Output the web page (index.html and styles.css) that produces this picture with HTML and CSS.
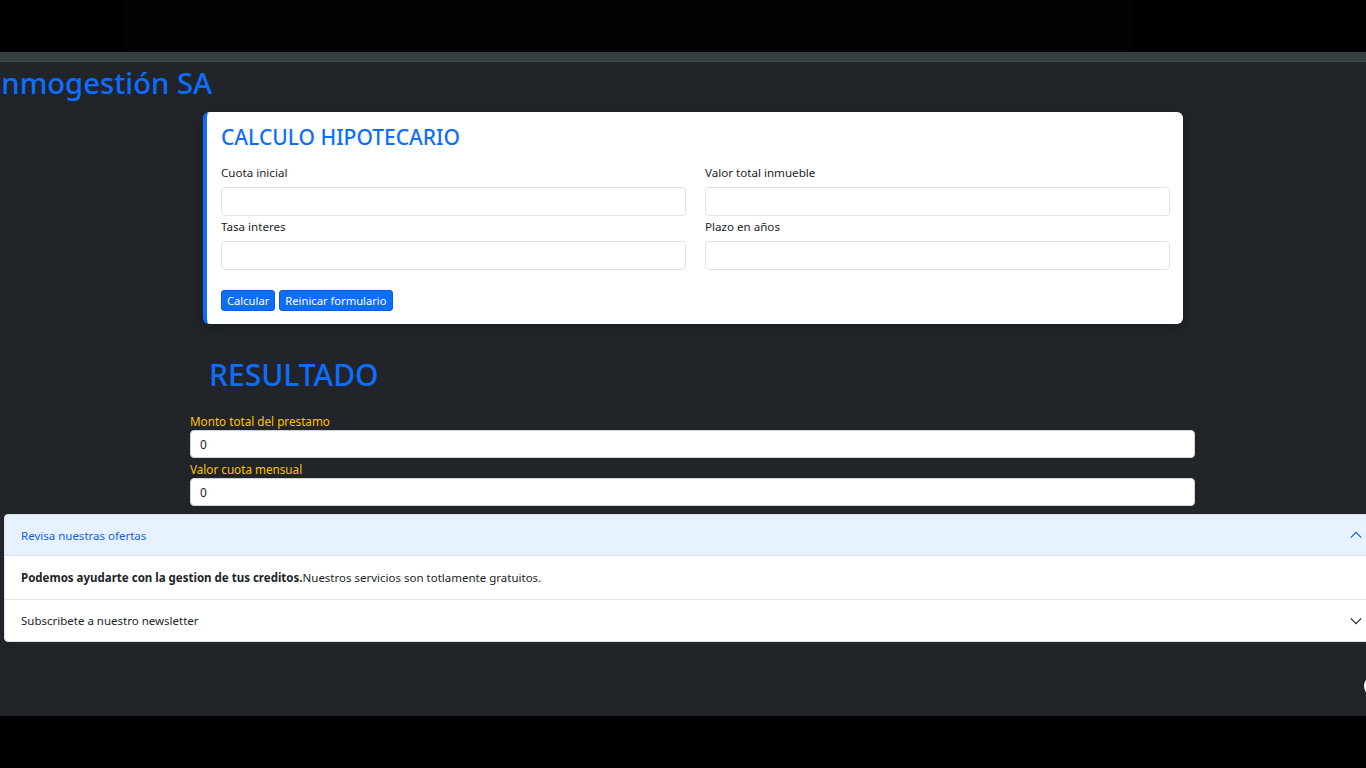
FILE: index.html
```html
<!DOCTYPE html>
<html lang="es">
<head>
<meta charset="utf-8">
<title>Inmogestión SA</title>
<link rel="stylesheet" href="styles.css">
</head>
<body>
<div class="topbar"><div class="tab"></div></div>
<div class="strip"></div>
<main class="page">
  <h3 class="brand">Inmogestión SA</h3>
  <section class="card">
    <h4 class="card-title">CALCULO HIPOTECARIO</h4>
    <div class="grid">
      <div class="field">
        <label class="label">Cuota inicial</label>
        <input class="input" type="text">
      </div>
      <div class="field">
        <label class="label">Valor total inmueble</label>
        <input class="input" type="text">
      </div>
      <div class="field">
        <label class="label">Tasa interes</label>
        <input class="input" type="text">
      </div>
      <div class="field">
        <label class="label">Plazo en años</label>
        <input class="input" type="text">
      </div>
    </div>
    <div class="actions">
      <button class="btn">Calcular</button>
      <button class="btn">Reinicar formulario</button>
    </div>
  </section>
  <section class="results">
    <h2 class="results-title">RESULTADO</h2>
    <label class="res-label">Monto total del prestamo</label>
    <div class="res-box">0</div>
    <label class="res-label">Valor cuota mensual</label>
    <div class="res-box">0</div>
  </section>
  <section class="accordion">
    <div class="acc-head open">
      <span>Revisa nuestras ofertas</span>
      <svg class="chev" viewBox="0 0 16 16" width="14" height="14"><path d="M2 11 L8 5 L14 11" fill="none" stroke="#0c63e4" stroke-width="1.4"/></svg>
    </div>
    <div class="acc-body"><strong>Podemos ayudarte con la gestion de tus creditos.</strong>Nuestros servicios son totlamente gratuitos.</div>
    <div class="acc-head">
      <span>Subscribete a nuestro newsletter</span>
      <svg class="chev" viewBox="0 0 16 16" width="14" height="14"><path d="M2 5 L8 11 L14 5" fill="none" stroke="#212529" stroke-width="1.4"/></svg>
    </div>
  </section>
  <div class="bubble"></div>
</main>
<div class="bottombar"></div>
</body>
</html>
```

FILE: styles.css
```css
* { box-sizing: border-box; }
html, body { margin: 0; padding: 0; }
body {
  background: #000;
  font-family: "Noto Sans", "Open Sans", sans-serif;
  color: #212529;
  overflow: hidden;
  width: 1366px;
  height: 768px;
}
.topbar {
  height: 52px;
  background: #000;
  padding: 0 233px 0 123px;
}
.tab {
  height: 52px;
  background: #030303;
  border-radius: 0 0 10px 10px;
}
.strip {
  height: 10px;
  background: #363e41;
  border-bottom: 1px solid #41494c;
}
.page {
  position: relative;
  height: 654px;
  background: #212529;
  overflow: hidden;
  padding-top: 1px;
}
.brand {
  margin: 0;
  margin-top: 2px;
  margin-left: -9px;
  font-size: 29.2px;
  font-weight: 500;
  line-height: 36px;
  color: #0d6efd;
}
.card {
  margin: 11px 0 0 203px;
  width: 980px;
  background: #fff;
  border-left: 4px solid #0d6efd;
  border-radius: 6px;
  padding: 12px 13px 13px 14px;
  box-shadow: 0 4px 14px rgba(0,0,0,0.25);
}
.card-title {
  margin: 0 0 12px;
  font-size: 21px;
  font-weight: 500;
  line-height: 26px;
  color: #0d6efd;
}
.grid {
  display: grid;
  grid-template-columns: 1fr 1fr;
  column-gap: 19px;
}
.field { display: flex; flex-direction: column; }
.label {
  font-size: 11.6px;
  line-height: 21px;
  margin-bottom: 4px;
  color: #212529;
}
.input {
  height: 29px;
  border: 1px solid #dee2e6;
  border-radius: 4px;
  background: #fff;
  font: inherit;
}
.actions {
  display: flex;
  gap: 4px;
  margin-top: 20px;
}
.btn {
  height: 21px;
  padding: 0 5px;
  border: 1px solid #0b5ed7;
  border-radius: 3px;
  background: #0d6efd;
  color: #fff;
  font-family: inherit;
  font-size: 11.2px;
  line-height: 19px;
}
.results {
  margin: 32px 0 0 190px;
  width: 1005px;
  display: flex;
  flex-direction: column;
}
.results-title {
  margin: 0 0 18px 19px;
  font-size: 30px;
  font-weight: 500;
  line-height: 38px;
  color: #0d6efd;
}
.res-label {
  font-size: 11.7px;
  line-height: 18px;
  color: #ffc107;
}
.res-box {
  height: 28px;
  background: #fff;
  border: 1px solid #ced4da;
  border-radius: 4px;
  padding: 0 9px;
  font-size: 12px;
  line-height: 27px;
  color: #212529;
  margin-bottom: 2px;
}
.accordion {
  margin: 6px 0 0 4px;
  width: 1380px;
  background: #fff;
  border: 1px solid #dee2e6;
  border-radius: 4px;
  overflow: hidden;
}
.acc-head {
  height: 41px;
  display: flex;
  align-items: center;
  justify-content: space-between;
  padding: 0 20px 0 16px;
  font-size: 11.5px;
  color: #212529;
}
.acc-head.open {
  background: #e7f1ff;
  color: #0c63e4;
  border-bottom: 1px solid #dee2e6;
  height: 41px;
}
.acc-body {
  height: 44px;
  padding: 0 16px;
  display: flex;
  align-items: center;
  font-size: 11.5px;
  border-bottom: 1px solid #dee2e6;
}
.bubble {
  position: absolute;
  left: 1364px;
  top: 613px;
  width: 22px;
  height: 22px;
  border-radius: 50%;
  background: #fff;
}
.bottombar {
  height: 52px;
  background: #000;
}
```
